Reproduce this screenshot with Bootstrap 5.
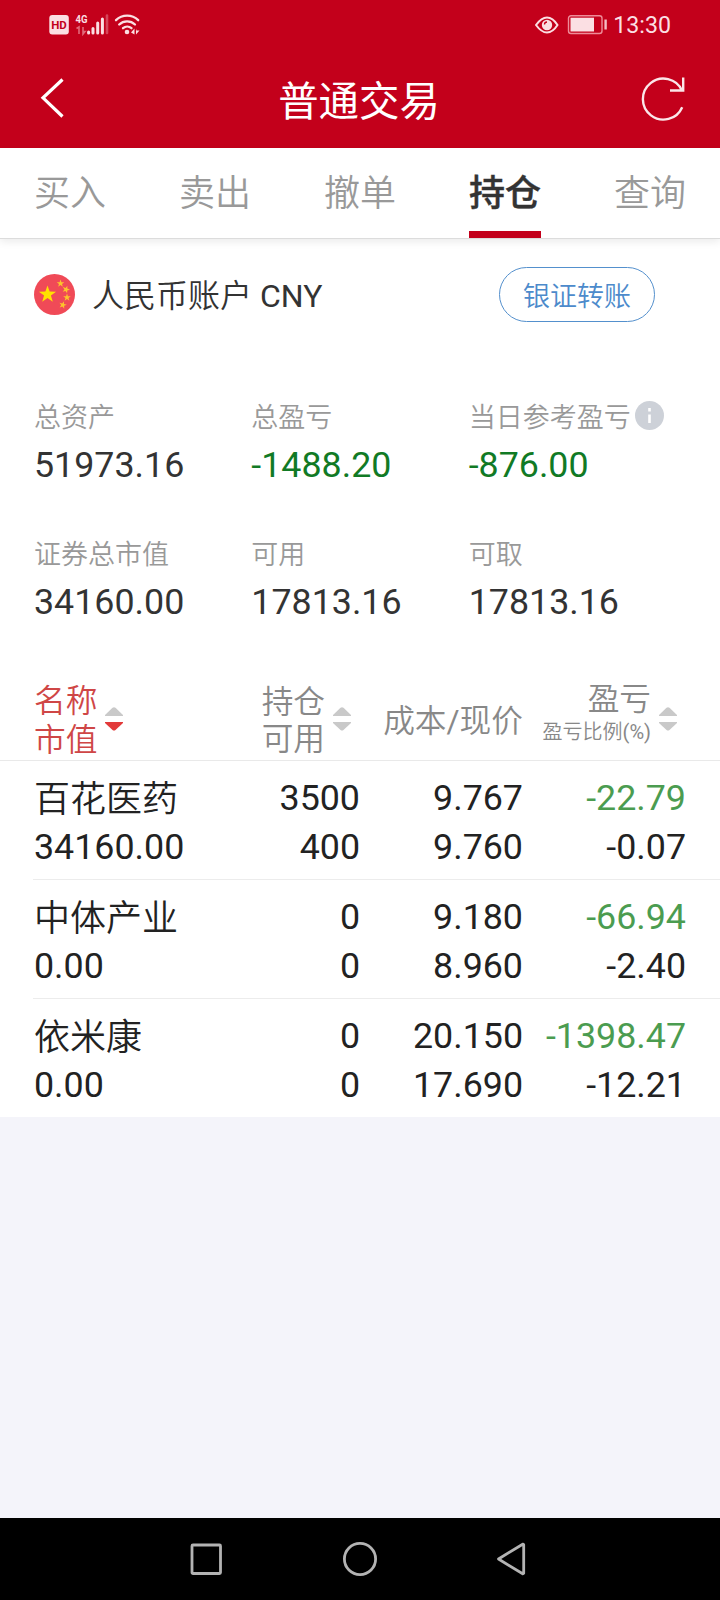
<!DOCTYPE html>
<html lang="zh-CN">
<head>
<meta charset="utf-8">
<meta name="viewport" content="width=device-width, initial-scale=1">
<title>普通交易</title>
<link href="https://cdn.jsdelivr.net/npm/bootstrap@5.3.0/dist/css/bootstrap.min.css" rel="stylesheet">
<style>
  body { font-family: Roboto, "Noto Sans CJK SC DemiLight", "Noto Sans CJK SC", sans-serif; color: #333; font-size: 36px; background: #f4f4fa; }
  svg { display: block; flex: none; }
  .screen { width: 720px; height: 1600px; }
  .side { padding-left: 34px; padding-right: 34px; }
  .top-area { background: #c3001b; height: 148px; }
  .status { height: 48px; padding: 0 49px; }
  .clock { font-size: 23.200px; line-height: 50px; color: #fbdfe3; margin-left: 6px; padding-top: 1px; }
  .title-bar { height: 100px; padding: 0 34px 0 40px; }
  .title-text { font-family: Roboto, "Noto Sans CJK SC", sans-serif; font-size: 40.400px; line-height: 110px; color: #fff; padding-right: 8px; }
  .tabs-bar { height: 91px; border-bottom: 1px solid #dcdcdc; box-shadow: 0 3px 8px rgba(0,0,0,.08); position: relative; }
  .tabs-bar a { height: 90px; line-height: 92px; color: #999; text-decoration: none; border-bottom: 7px solid transparent; }
  .tabs-bar a.active { color: #333; font-family: "Noto Sans CJK SC Medium", "Noto Sans CJK SC", sans-serif; font-weight: 500; -webkit-text-stroke: .4px #333; line-height: 84px; border-color: #c3001b; }
  .account { height: 111px; font-size: 32px; line-height: 48px; }
  .currency { margin-left: 17px; padding-top: 3px; }
  .transfer { width: 156px; height: 55px; border: 1px solid #5490cd; color: #4c8acb; font-size: 27px; line-height: 58px; margin-right: 31px; }
  .stats { padding-top: 42px; height: 307px; }
  .stats .col-4 { height: 137px; }
  .lbl { font-size: 27px; line-height: 52px; color: #999; }
  .info-icon { margin: -5px 0 0 4px; }
  .val { font-size: 35.800px; line-height: 42px; }
  .down { color: #117a25; }
  .grid { display: grid; grid-template-columns: 170px 156px 163px 163px; }
  .thead-row { height: 104px; font-size: 31.700px; color: #888; border-bottom: 1px solid #e9e9e9; }
  .thead-row > div { display: flex; align-items: flex-start; }
  .thead-row svg { margin-top: 50px; }
  .sort-end { margin: 0 9px 0 8px; }
  .two-line { line-height: 38.500px; padding-top: 26px; }
  .two-line-tight { line-height: 36.500px; padding-top: 28px; }
  .one-line { line-height: 40px; padding-top: 45px; }
  .pnl-head { line-height: 36px; padding-top: 25px; }
  .pct { font-size: 20px; line-height: 29px; white-space: nowrap; }
  .sorted { color: #cf4646; }
  .holding { height: 119px; margin-left: 33px; padding: 13px 34px 0 1px; border-bottom: 1px solid #ececec; font-size: 35.800px; line-height: 49px; color: #222; }
  .holding:last-child { border-bottom: 0; height: 118px; }
  .stock { display: block; height: 49px; line-height: 52px; font-size: 36px; }
  .loss { color: #4b9c50; }
  .sys-nav { height: 82px; background: #000; padding: 0 192px 0 190px; }
</style>
</head>
<body>
<div class="screen d-flex flex-column overflow-hidden">
  <header class="top-area">
    <div class="status d-flex align-items-center justify-content-between">
      <svg width="92" height="24" viewBox="0 0 92 24">
        <rect x="0.3" y="3" width="19.500" height="19.500" rx="3" fill="#fbdfe3"/>
        <text x="10" y="17" font-size="11.500" font-weight="700" text-anchor="middle" fill="#c3001b">HD</text>
        <text x="26.500" y="11" font-size="11.500" font-weight="700" textLength="12" lengthAdjust="spacingAndGlyphs" fill="#fbdfe3">4G</text>
        <path d="M27.500 16.500l2.500-1.500v7M34 15v7l2-2.500h-2" fill="none" stroke="#e06a7b" stroke-width="1.600"/>
        <path d="M39.600 20v1M44 16.500v4.500M48.700 11v10M53.400 7v14" stroke="#fbdfe3" stroke-width="3" stroke-linecap="round"/>
        <path d="M58 3.500v17.500" stroke="#d5455a" stroke-width="2.600" stroke-linecap="round"/>
        <path d="M67 8.200a16 16 0 0 1 22.200 0M70.200 12.500a11.500 11.500 0 0 1 15.800 0M74 16.200a6.500 6.500 0 0 1 8.500 0" fill="none" stroke="#fbdfe3" stroke-width="2.300" stroke-linecap="round"/>
        <circle cx="78" cy="20" r="2.300" fill="#fbdfe3"/>
        <path d="M82 20.500l3.500-4v6M87 16.500v6l3.500-4h-3" fill="#fbdfe3"/>
      </svg>
      <div class="d-flex align-items-center">
        <svg width="72" height="24" viewBox="0 0 72 24">
          <path d="M1 13C5 7.500 8.500 5.500 12 5.500S19 7.500 22.500 13C19 18.500 15.500 20.500 12 20.500S5 18.500 1 13z" fill="none" stroke="#fbdfe3" stroke-width="2"/>
          <circle cx="12" cy="13" r="5.200" fill="#fbdfe3"/>
          <path d="M9.500 12.500a2.500 2.500 0 0 1 2.500-2.500" fill="none" stroke="#c3001b" stroke-width="1.300"/>
          <rect x="33.500" y="3.700" width="33.500" height="17.800" rx="2.500" fill="none" stroke="#ee8c99" stroke-width="1.400"/>
          <rect x="35.500" y="5.700" width="23.500" height="13.800" fill="#fbdfe3"/>
          <path d="M70.600 7.500v10" stroke="#f5bcc4" stroke-width="2.400"/>
        </svg>
        <span class="clock">13:30</span>
      </div>
    </div>
    <div class="title-bar d-flex align-items-start justify-content-between">
      <svg width="46" height="100" viewBox="0 0 46 100"><path d="M22.500 31.500L3 49.800 22.500 68.500" fill="none" stroke="#fff" stroke-width="3.200"/></svg>
      <h1 class="title-text fw-normal m-0">普通交易</h1>
      <svg width="46" height="100" viewBox="0 0 46 100"><path d="M42.200 59.200A20.500 20.500 0 1 1 42 42.500M43.200 29.500V42.500H30" fill="none" stroke="#fbe6e9" stroke-width="2.400"/></svg>
    </div>
  </header>

  <nav class="tabs-bar side bg-white d-flex justify-content-between">
    <a href="#">买入</a><a href="#">卖出</a><a href="#">撤单</a><a href="#" class="active">持仓</a><a href="#">查询</a>
  </nav>

  <main class="bg-white">
    <section class="account side d-flex align-items-center">
      <svg width="41" height="41" viewBox="0 0 41 41">
        <defs><path id="star" d="M0 -1L.2351 -.3236L.9511 -.309L.3804 .1236L.5878 .809L0 .4L-.5878 .809L-.3804 .1236L-.9511 -.309L-.2351 -.3236z"/></defs>
        <circle cx="20.500" cy="20.500" r="20.500" fill="#f04a57"/>
        <use href="#star" transform="translate(13.500 20.500) scale(9)" fill="#ffe100"/>
        <g fill="#fcc42c">
          <use href="#star" transform="translate(26.500 9.500) scale(4)"/>
          <use href="#star" transform="translate(32 15.500) rotate(20) scale(4)"/>
          <use href="#star" transform="translate(33 23.500) scale(4)"/>
          <use href="#star" transform="translate(28.800 31) rotate(15) scale(4)"/>
        </g>
      </svg>
      <span class="currency me-auto">人民币账户 CNY</span>
      <a href="#" class="transfer rounded-pill text-center text-decoration-none">银证转账</a>
    </section>

    <section class="stats side">
      <div class="row g-0">
        <div class="col-4"><div class="lbl">总资产</div><div class="val">51973.16</div></div>
        <div class="col-4"><div class="lbl">总盈亏</div><div class="val down">-1488.20</div></div>
        <div class="col-4">
          <div class="lbl d-flex align-items-center">当日参考盈亏
            <svg class="info-icon" width="29" height="29" viewBox="0 0 29 29"><circle cx="14.500" cy="14.500" r="14.500" fill="#cdd1d8"/><path d="M14.500 7v3.500M14.500 13.500v8.500" stroke="#fff" stroke-width="2.600"/></svg>
          </div>
          <div class="val down">-876.00</div>
        </div>
        <div class="col-4"><div class="lbl">证券总市值</div><div class="val">34160.00</div></div>
        <div class="col-4"><div class="lbl">可用</div><div class="val">17813.16</div></div>
        <div class="col-4"><div class="lbl">可取</div><div class="val">17813.16</div></div>
      </div>
    </section>

    <section>
      <div class="thead-row grid side">
        <div class="sorted">
          <div class="two-line">名称<br>市值</div>
          <svg class="ms-2" width="18" height="25" viewBox="0 0 18 25"><path d="M0 9V8L7.500 .8q1.500-1.200 3 0L18 8v1z" fill="#c9c9c9"/><path d="M0 15v1l7.500 7q1.500 1.200 3 0l7.500-7v-1z" fill="#e23a3a"/></svg>
        </div>
        <div class="justify-content-end text-end">
          <div class="two-line-tight">持仓<br>可用</div>
          <svg class="sort-end" width="18" height="25" viewBox="0 0 18 25"><g id="sort" fill="#c9c9c9"><path d="M0 9V8L7.500 .8q1.500-1.200 3 0L18 8v1z"/><path d="M0 15v1l7.500 7q1.500 1.200 3 0l7.500-7v-1z"/></g></svg>
        </div>
        <div class="justify-content-end"><div class="one-line">成本/现价</div></div>
        <div class="justify-content-end text-end">
          <div class="pnl-head">盈亏<div class="pct">盈亏比例(%)</div></div>
          <svg class="sort-end" width="18" height="25" viewBox="0 0 18 25"><use href="#sort"/></svg>
        </div>
      </div>
      <div>
        <div class="holding grid">
          <div><span class="stock">百花医药</span>34160.00</div>
          <div class="text-end">3500<br>400</div>
          <div class="text-end">9.767<br>9.760</div>
          <div class="text-end text-nowrap"><span class="loss">-22.79</span><br>-0.07</div>
        </div>
        <div class="holding grid">
          <div><span class="stock">中体产业</span>0.00</div>
          <div class="text-end">0<br>0</div>
          <div class="text-end">9.180<br>8.960</div>
          <div class="text-end text-nowrap"><span class="loss">-66.94</span><br>-2.40</div>
        </div>
        <div class="holding grid">
          <div><span class="stock">依米康</span>0.00</div>
          <div class="text-end">0<br>0</div>
          <div class="text-end">20.150<br>17.690</div>
          <div class="text-end text-nowrap"><span class="loss">-1398.47</span><br>-12.21</div>
        </div>
      </div>
    </section>
  </main>

  <footer class="sys-nav mt-auto d-flex align-items-center justify-content-between">
    <svg width="32" height="36" viewBox="0 0 32 36"><rect x="2" y="4" width="28.500" height="28.500" rx="1" fill="none" stroke="#b3b3b3" stroke-width="2.800"/></svg>
    <svg width="36" height="36" viewBox="0 0 36 36"><circle cx="19" cy="18" r="15.600" fill="none" stroke="#b3b3b3" stroke-width="2.800"/></svg>
    <svg width="32" height="36" viewBox="0 0 32 36"><path d="M2.500 18L26.700 3.200a1 1 0 0 1 1 .6v28.400a1 1 0 0 1-1 .6z" fill="none" stroke="#b3b3b3" stroke-width="2.800" stroke-linejoin="round"/></svg>
  </footer>
</div>
<script src="https://cdn.jsdelivr.net/npm/bootstrap@5.3.0/dist/js/bootstrap.bundle.min.js"></script>
</body>
</html>
